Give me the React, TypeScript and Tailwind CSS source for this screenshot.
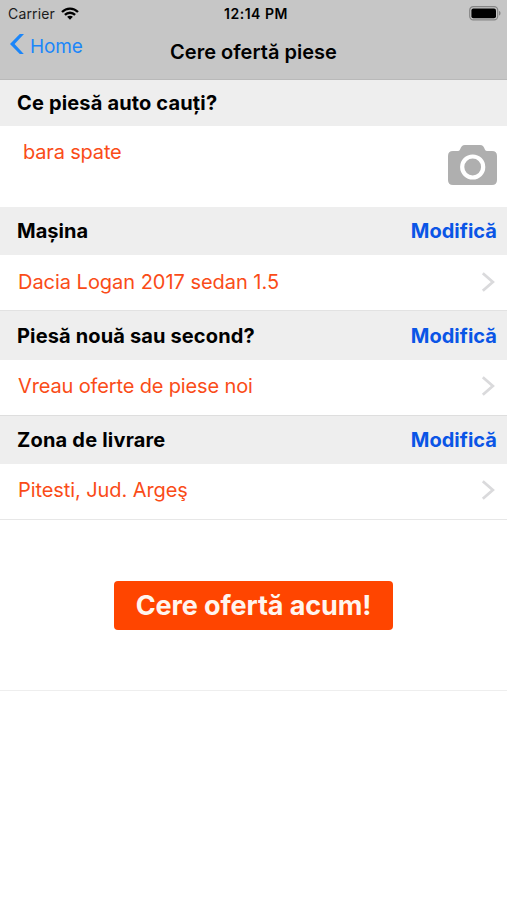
import type { ReactNode } from 'react';

function SectionHeader({ title, className, titleClass, action }: { title: string; className: string; titleClass: string; action?: boolean }) {
  return (
    <div className={`flex items-center justify-between bg-[#eeeeee] pl-[17px] pr-[10px] ${className}`}>
      <h2 className={`whitespace-nowrap text-[20px] leading-6 font-bold text-black ${titleClass}`}>{title}</h2>
      {action && (
        <button className="whitespace-nowrap text-[20px] leading-6 font-bold tracking-[0.02px] text-[#0a55e6]">Modifică</button>
      )}
    </div>
  );
}

function ValueRow({ children, className }: { children: ReactNode; className: string }) {
  return (
    <div className={`flex items-center justify-between border-b bg-white pl-[18px] pr-[12px] ${className}`}>
      {children}
      <svg className="h-[20px] w-[14px]" viewBox="0 0 14 20" fill="none" stroke="#dadadc" strokeWidth="2.8">
        <path d="M1.8 1.2 L11.8 10 L1.8 18.8" />
      </svg>
    </div>
  );
}

export default function App() {
  return (
    <main className="flex h-[900px] w-[507px] flex-col overflow-hidden bg-white font-['Inter','Liberation_Sans',sans-serif]">
      <header className="h-[80px] shrink-0 border-b border-[#b9b9b9] bg-[#c6c6c6]">
        <div className="grid h-[27px] grid-cols-3 items-center pl-[8px] pr-[6px] text-[14px] text-black">
          <div className="flex items-center gap-[6px]">
            <span className="tracking-[0.15px] text-[#1c1c1c]">Carrier</span>
            <svg className="h-[13px] w-[18px]" viewBox="0 0 18 13" fill="none" stroke="#000" strokeWidth="2.3">
              <path d="M1 5 C5.5 0.4 12.5 0.4 17 5" />
              <path d="M3.9 7.9 C6.8 5 11.2 5 14.1 7.9" />
              <path d="M9 12.7 L6.1 9.8 C7.7 8.4 10.3 8.4 11.9 9.8 Z" fill="#000" stroke="none" />
            </svg>
          </div>
          <span className="whitespace-nowrap pl-[3px] text-center font-semibold tracking-[0.5px]">12:14 PM</span>
          <svg className="h-[15px] w-[32px] justify-self-end" viewBox="0 0 32 15" fill="none">
            <rect x="0.7" y="0.7" width="28" height="13.2" rx="3.6" stroke="#858585" strokeWidth="1.2" />
            <rect x="2.4" y="2.4" width="24.6" height="9.8" rx="2" fill="#000" />
            <path d="M30 5 C32 5.5 32 9 30 9.6 Z" fill="#858585" />
          </svg>
        </div>
        <div className="grid h-[52px] grid-cols-[160px_1fr_160px] items-start">
          <button className="flex items-start pl-[9px] pt-[6px] text-[#1c86f9]">
            <svg className="h-[22px] w-[15px]" viewBox="0 0 15 22" fill="#1c86f9">
              <path d="M10.8 1 H15 L5.6 11 L14.8 21 H10.8 L1 11 Z" />
            </svg>
            <span className="ml-[6px] mt-[2px] text-[19px] leading-6 tracking-[-0.1px]">Home</span>
          </button>
          <h1 className="whitespace-nowrap pt-[13px] text-center text-[20px] leading-6 font-semibold tracking-[0.02px] text-black">Cere ofertă piese</h1>
        </div>
      </header>
      <SectionHeader title="Ce piesă auto cauți?" className="h-[46px]" titleClass="tracking-[0.16px]" />
      <div className="flex h-[81px] items-start justify-between bg-white pl-[23px] pr-[10px]">
        <span className="pt-[14px] text-[20px] leading-6 tracking-[-0.17px] text-[#fa4c18]">bara spate</span>
        <svg className="mt-[18px] h-[42px] w-[49px]" viewBox="0 0 49 42">
          <path d="M5 7 H10 C13.5 7 11.5 1 17 1 H32 C37.5 1 35.5 7 39 7 H44 Q49 7 49 12 V36 Q49 41 44 41 H5 Q0 41 0 36 V12 Q0 7 5 7 Z" fill="#afafaf" />
          <circle cx="24.7" cy="23" r="10.5" fill="none" stroke="#fff" strokeWidth="4.2" />
        </svg>
      </div>
      <SectionHeader title="Mașina" className="h-[48px]" titleClass="tracking-[0.02px]" action />
      <ValueRow className="h-[56px] border-[#e2e2e2] pb-[2px]">
        <span className="whitespace-nowrap text-[20px] leading-6 tracking-[-0.03px] text-[#fa4c18]">Dacia Logan 2017 sedan 1.5</span>
      </ValueRow>
      <SectionHeader title="Piesă nouă sau second?" className="h-[49px]" titleClass="tracking-[0.14px]" action />
      <ValueRow className="h-[56px] border-[#dedede] pb-[3px]">
        <span className="whitespace-nowrap text-[20px] leading-6 tracking-[-0.14px] text-[#fa4c18]">Vreau oferte de piese noi</span>
      </ValueRow>
      <SectionHeader title="Zona de livrare" className="h-[48px]" titleClass="tracking-[0.2px]" action />
      <ValueRow className="h-[56px] border-[#e7e7e7] pb-[3px]">
        <span className="whitespace-nowrap text-[20px] leading-6 tracking-[-0.08px] text-[#fa4c18]">Pitesti, Jud. Argeş</span>
      </ValueRow>
      <section className="flex h-[171px] items-start justify-center border-b border-[#eeeeee] pt-[61px]">
        <button className="h-[49px] w-[279px] whitespace-nowrap rounded-[4px] bg-[#ff4500] pt-[2px] text-[27px] font-bold tracking-[-0.1px] text-[#fff5ef]">Cere ofertă acum!</button>
      </section>
    </main>
  );
}
